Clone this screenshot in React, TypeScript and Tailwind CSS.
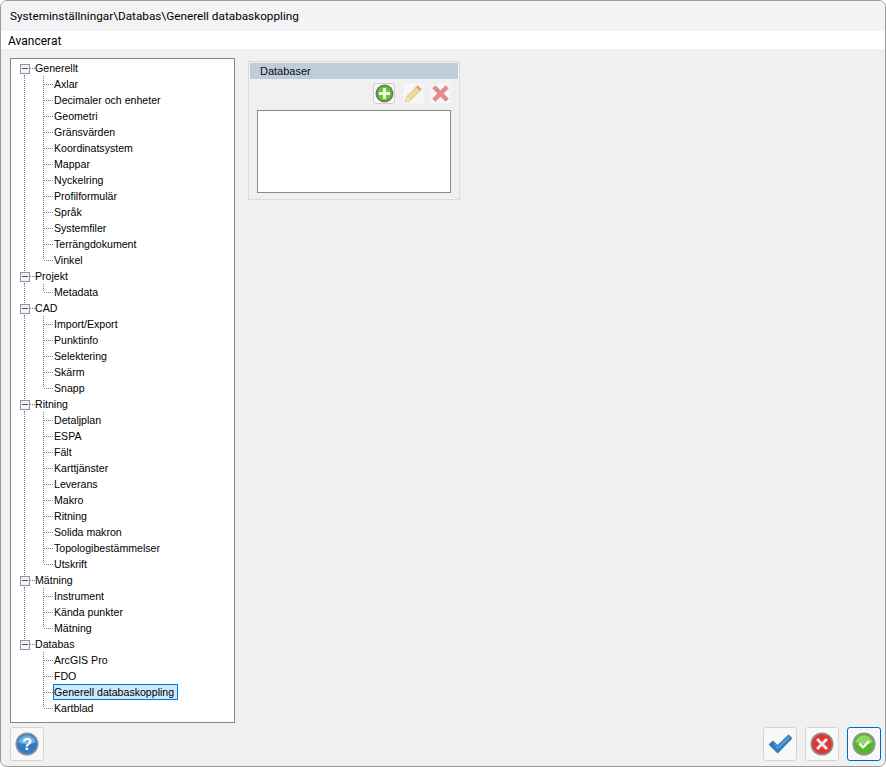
import React from "react";

type TreeGroup = { label: string; items: string[] };

const tree: TreeGroup[] = [
  {
    label: "Generellt",
    items: [
      "Axlar",
      "Decimaler och enheter",
      "Geometri",
      "Gränsvärden",
      "Koordinatsystem",
      "Mappar",
      "Nyckelring",
      "Profilformulär",
      "Språk",
      "Systemfiler",
      "Terrängdokument",
      "Vinkel",
    ],
  },
  { label: "Projekt", items: ["Metadata"] },
  { label: "CAD", items: ["Import/Export", "Punktinfo", "Selektering", "Skärm", "Snapp"] },
  {
    label: "Ritning",
    items: [
      "Detaljplan",
      "ESPA",
      "Fält",
      "Karttjänster",
      "Leverans",
      "Makro",
      "Ritning",
      "Solida makron",
      "Topologibestämmelser",
      "Utskrift",
    ],
  },
  { label: "Mätning", items: ["Instrument", "Kända punkter", "Mätning"] },
  { label: "Databas", items: ["ArcGIS Pro", "FDO", "Generell databaskoppling", "Kartblad"] },
];

const dots = { stroke: "#7a7a7a", strokeDasharray: "1 1", shapeRendering: "crispEdges" as const };

function RootGuide({ first, last }: { first: boolean; last: boolean }) {
  return (
    <svg width="24" height="16" viewBox="0 0 24 16" className="shrink-0">
      {!first && <line x1="13.5" y1="0" x2="13.5" y2="4" {...dots} />}
      {!last && <line x1="13.5" y1="13" x2="13.5" y2="16" {...dots} />}
      <line x1="19" y1="8.5" x2="24" y2="8.5" {...dots} />
      <rect x="9.5" y="4.5" width="9" height="9" fill="#f4f4f4" stroke="#8f959b" shapeRendering="crispEdges" />
      <line x1="11" y1="8.5" x2="17" y2="8.5" stroke="#2b4f8f" shapeRendering="crispEdges" />
    </svg>
  );
}

function ItemGuide({ groupLast, itemLast }: { groupLast: boolean; itemLast: boolean }) {
  return (
    <svg width="42" height="16" viewBox="0 0 42 16" className="shrink-0">
      {!groupLast && <line x1="13.5" y1="0" x2="13.5" y2="16" {...dots} />}
      <line x1="32.5" y1="0" x2="32.5" y2={itemLast ? 8 : 16} {...dots} />
      <line x1="33" y1="8.5" x2="42" y2="8.5" {...dots} />
    </svg>
  );
}

function Tree() {
  return (
    <div className="w-[225px] h-[665px] shrink-0 border border-[#828790] bg-white pt-[1px] font-['Liberation_Sans',sans-serif] text-[10.6px] text-black overflow-hidden">
      {tree.map((group, gi) => {
        const groupLast = gi === tree.length - 1;
        return (
          <div key={group.label}>
            <div className="flex h-[16px] items-center leading-[16px]">
              <RootGuide first={gi === 0} last={groupLast} />
              <span className="whitespace-nowrap">{group.label}</span>
            </div>
            {group.items.map((item, i) => {
              const selected = item === "Generell databaskoppling";
              return (
                <div key={item} className="flex h-[16px] items-center leading-[16px]">
                  <ItemGuide groupLast={groupLast} itemLast={i === group.items.length - 1} />
                  <span
                    className={
                      selected
                        ? "whitespace-nowrap border border-[#0078d7] bg-[#cce8ff] pr-[3px] h-[16px] leading-[14px]"
                        : "whitespace-nowrap pl-[1px]"
                    }
                  >
                    {item}
                  </span>
                </div>
              );
            })}
          </div>
        );
      })}
    </div>
  );
}

function PanelDatabases() {
  return (
    <div className="mt-[3px] ml-[13px] h-[139px] w-[212px] shrink-0 border border-[#dcdcdc] p-[1px]">
      <div className="h-[16px] bg-[#bfcddb] pl-[10px] font-['Liberation_Sans',sans-serif] text-[11px] leading-[17px] text-[#0c0c20]">
        Databaser
      </div>
      <div className="mt-[4px] flex justify-end pr-[7px]">
        <div className="mr-[8px] flex h-[21px] w-[22px] items-center justify-center rounded-[3px] border border-[#cfcfcf] bg-[#f7f7f7]">
          <svg width="19" height="19" viewBox="0 0 18 18">
            <circle cx="9" cy="9" r="8.5" fill="#6a7a6a" />
            <circle cx="9" cy="9" r="6.8" fill="#62c531" />
            <path d="M7.600 3.800h2.800v3.800h3.800v2.800h-3.800v3.800H7.600v-3.800H3.800V7.600h3.800z" fill="#eafbe0" />
          </svg>
        </div>
        <div className="mr-[6px] flex h-[21px] w-[21px] items-center justify-center rounded-[3px] border border-[#f3f3f3] bg-[#f7f7f7]">
          <svg width="19" height="19" viewBox="0 0 18 18">
            <path d="M1.500 17l1-5L13 1.500 16.500 5 6 15.500z" fill="#ecdc94" stroke="#cdb978" strokeWidth="0.8" />
            <path d="M13 1.500L16.500 5 15 6.500 11.500 3z" fill="#e89a90" />
            <path d="M1.500 17l1-5L6 15.500z" fill="#f3e6c0" />
          </svg>
        </div>
        <div className="flex h-[21px] w-[21px] items-center justify-center rounded-[3px] border border-[#f3f3f3] bg-[#f7f7f7]">
          <svg width="19" height="19" viewBox="0 0 18 18">
            <path
              d="M4 1.500L9 6.200l5-4.700 2.500 2.500L11.800 9l4.700 5-2.500 2.500L9 11.800l-5 4.700L1.500 14l4.700-5L1.500 4z"
              fill="#e58a88"
              stroke="#c9a0a0"
              strokeWidth="0.6"
            />
          </svg>
        </div>
      </div>
      <div className="mx-[7px] mt-[6px] h-[83px] border border-[#868a8e] bg-white" />
    </div>
  );
}

function FootButton({ children, focus }: { children: React.ReactNode; focus?: boolean }) {
  return (
    <div
      className={
        "flex h-[34px] w-[34px] items-center justify-center rounded-[3px] border bg-[#f8f8f8] " +
        (focus ? "border-[#0067c0]" : "border-[#d4d4d4]")
      }
    >
      {children}
    </div>
  );
}

export default function App() {
  return (
    <div className="flex h-[767px] w-[886px] flex-col overflow-hidden rounded-[7px] border border-[#9a9a9a] bg-[#f0f0f0] font-['Roboto','Noto_Sans',sans-serif] text-black">
      <div className="h-[30px] shrink-0 bg-[#f3f3f5] pl-[9px] text-[11.75px] leading-[31px]">
        Systeminställningar\Databas\Generell databaskoppling
      </div>
      <div className="h-[18px] shrink-0 bg-white pl-[7px] text-[12px] leading-[20px]">Avancerat</div>
      <div className="flex flex-1 pt-[9px] pl-[9px]">
        <Tree />
        <PanelDatabases />
      </div>
      <div className="flex h-[43px] shrink-0 items-start justify-between pt-[4px] pr-[4px] pl-[9px]">
        <FootButton>
          <svg width="24" height="24" viewBox="0 0 26 26">
            <circle cx="13" cy="13" r="12.500" fill="#8a949c" />
            <circle cx="13" cy="13" r="10.800" fill="#2f7cc2" />
            <path d="M3.500 11a9.800 9.800 0 0 1 19 0q-9.500 4-19 0z" fill="#6fb0e4" />
            <text
              x="13"
              y="19.500"
              textAnchor="middle"
              fontSize="18"
              fontWeight="700"
              fill="#ffffff"
              fontFamily="Liberation Sans, sans-serif"
            >
              ?
            </text>
          </svg>
        </FootButton>
        <div className="flex gap-[8px]">
          <FootButton>
            <svg width="25" height="21" viewBox="0 0 26 22">
              <path d="M1 11l4-3.500 5 4.500L21.500 1 25 4.500 10 20z" fill="#2f7cc0" stroke="#1c5a94" strokeWidth="0.8" />
              <path d="M5 8.500l5 4.500L21.500 2.500l1.500 1.500L10 16z" fill="#5aa3dc" />
            </svg>
          </FootButton>
          <FootButton>
            <svg width="24" height="24" viewBox="0 0 26 26">
              <circle cx="13" cy="13" r="12.500" fill="#8e8e8e" />
              <circle cx="13" cy="13" r="10.800" fill="#d9393a" />
              <path d="M8.800 6.500L13 10.700l4.200-4.200 2.300 2.300-4.200 4.200 4.200 4.200-2.300 2.300-4.200-4.200-4.200 4.200-2.300-2.300 4.200-4.200-4.200-4.200z" fill="#f6e4e4" />
            </svg>
          </FootButton>
          <FootButton focus>
            <svg width="24" height="24" viewBox="0 0 26 26">
              <circle cx="13" cy="13" r="12.500" fill="#8e948e" />
              <circle cx="13" cy="13" r="10.800" fill="#55b52c" />
              <path d="M3.500 11a9.800 9.800 0 0 1 19 0q-9.500 4-19 0z" fill="#8fd667" />
              <path d="M7 13.500l2-2 3 3 5.500-5.500 2 2-7.500 7.500z" fill="#f2faee" />
            </svg>
          </FootButton>
        </div>
      </div>
    </div>
  );
}
